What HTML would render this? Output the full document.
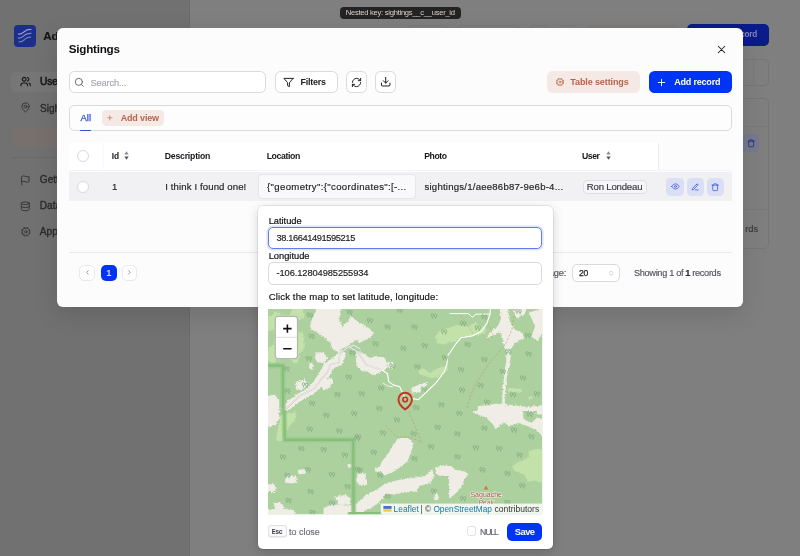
<!DOCTYPE html>
<html>
<head>
<meta charset="utf-8">
<title>Sightings</title>
<style>
*{box-sizing:border-box;margin:0;padding:0}
html,body{width:800px;height:556px;overflow:hidden;background:#7f7f7f;font-family:"Liberation Sans",sans-serif;}
.a{position:absolute}
.t{position:absolute;white-space:nowrap;line-height:1}
svg{overflow:visible}
#root{position:absolute;left:0;top:0;width:800px;height:556px;will-change:transform}
</style>
</head>
<body>
<div id="root">
<div class="a" style="left:0px;top:0px;width:800.00px;height:556.00px;background:#7f7f7f"></div>
<div class="a" style="left:0px;top:0px;width:189.60px;height:556.00px;background:#717171;border-right:1px solid #6b6b6b"></div>
<div class="a" style="left:14px;top:25px;width:22.00px;height:22.00px;background:#1b2e8c;border-radius:4px"></div>
<svg class="a" style="left:14px;top:25px" width="22" height="22" viewBox="0 0 22 22" fill="none" stroke="#949cc6" stroke-width="1.25" stroke-linecap="round"><path d="M4.5 9.2c3.2.3 4.3-1.2 6-2.7s3.2-2.3 6.5-2"/><path d="M4.5 13c3.2.3 4.3-1.2 6-2.7s3.2-2.3 6.5-2" opacity=".85"/><path d="M5 16.8c3.2.3 4.3-1.2 6-2.7s3-2.2 5.5-2" opacity=".7"/></svg>
<span class="t" style="left:43.2px;top:29.88px;font-size:11.6px;color:#151515;font-weight:bold;-webkit-text-stroke:.16px currentColor;">Ad</span>
<div class="a" style="left:10.5px;top:71.5px;width:179.50px;height:20.00px;background:#767676;border-radius:5px 0 0 5px"></div>
<svg class="a" style="left:19.80px;top:76.10px" width="11.2" height="11.2" viewBox="0 0 24 24" fill="none" stroke="#161616" stroke-width="2.4" stroke-linecap="round" stroke-linejoin="round"><path d="M16 21v-2a4 4 0 0 0-4-4H6a4 4 0 0 0-4 4v2"/><circle cx="9" cy="7" r="4"/><path d="M22 21v-2a4 4 0 0 0-3-3.87"/><path d="M16 3.13a4 4 0 0 1 0 7.75"/></svg>
<span class="t" style="left:40px;top:77.45px;font-size:10.1px;color:#141414;-webkit-text-stroke:.5px #141414;">Use</span>
<svg class="a" style="left:19.90px;top:102.30px" width="11" height="11" viewBox="0 0 24 24" fill="none" stroke="#343434" stroke-width="2.1" stroke-linecap="round" stroke-linejoin="round"><path d="M20 10c0 6-8 12-8 12s-8-6-8-12a8 8 0 0 1 16 0Z"/><circle cx="12" cy="10" r="3"/></svg>
<span class="t" style="left:40px;top:103.85px;font-size:10.1px;color:#2a2a2a;-webkit-text-stroke:.32px #2a2a2a;">Sigh</span>
<div class="a" style="left:10.5px;top:127.5px;width:179.50px;height:18.30px;background:#78706d;border-radius:5px 0 0 5px"></div>
<div class="a" style="left:10.5px;top:157.3px;width:178.50px;height:0.80px;background:#696969"></div>
<svg class="a" style="left:20.00px;top:174.50px" width="10.8" height="10.8" viewBox="0 0 24 24" fill="none" stroke="#343434" stroke-width="2.1" stroke-linecap="round" stroke-linejoin="round"><path d="M4 15s1-1 4-1 5 2 8 2 4-1 4-1V3s-1 1-4 1-5-2-8-2-4 1-4 1z"/><path d="M4 22v-7"/></svg>
<span class="t" style="left:39.8px;top:175.15px;font-size:10.1px;color:#2a2a2a;-webkit-text-stroke:.32px #2a2a2a;">Gett</span>
<svg class="a" style="left:20.10px;top:200.50px" width="10.6" height="10.6" viewBox="0 0 24 24" fill="none" stroke="#343434" stroke-width="2.1" stroke-linecap="round" stroke-linejoin="round"><ellipse cx="12" cy="5" rx="9" ry="3"/><path d="M3 5v14a9 3 0 0 0 18 0V5"/><path d="M3 12a9 3 0 0 0 18 0"/></svg>
<span class="t" style="left:39.8px;top:201.35px;font-size:10.1px;color:#2a2a2a;-webkit-text-stroke:.32px #2a2a2a;">Data</span>
<svg class="a" style="left:19.60px;top:226.10px" width="11.6" height="11.6" viewBox="0 0 24 24" fill="none" stroke="#343434" stroke-width="1.9" stroke-linecap="round" stroke-linejoin="round"><circle cx="12" cy="12" r="7.7"/><path d="M19.76 15.21L20.96 15.71M15.21 19.76L15.71 20.96M8.79 19.76L8.29 20.96M4.24 15.21L3.04 15.71M4.24 8.79L3.04 8.29M8.79 4.24L8.29 3.04M15.21 4.24L15.71 3.04M19.76 8.79L20.96 8.29" stroke-width="3.8" stroke-linecap="butt"/><circle cx="12" cy="12" r="2.5" stroke-width="1.8"/></svg>
<span class="t" style="left:39.8px;top:227.25px;font-size:10.1px;color:#2a2a2a;-webkit-text-stroke:.32px #2a2a2a;">App</span>
<div class="a" style="left:686.5px;top:24px;width:82.00px;height:21.70px;background:#0a1b8a;border-radius:5px"></div>
<span class="t" style="left:740.2px;top:31.46px;font-size:8.2px;font-weight:bold;color:#8188b9;letter-spacing:-0.250px;">cord</span>
<div class="a" style="left:407px;top:24.5px;width:41.00px;height:21.50px;border:1px solid #787878;border-radius:5px"></div>
<div class="a" style="left:457px;top:24.5px;width:63.00px;height:21.50px;border:1px solid #787878;border-radius:5px"></div>
<div class="a" style="left:529px;top:24.5px;width:21.00px;height:21.50px;border:1px solid #787878;border-radius:5px"></div>
<div class="a" style="left:557.5px;top:24.5px;width:20.50px;height:21.50px;border:1px solid #787878;border-radius:5px"></div>
<div class="a" style="left:587px;top:24.5px;width:92.00px;height:21.50px;background:#7f7a78;border-radius:5px"></div>
<div class="a" style="left:700px;top:59.3px;width:68.50px;height:27.00px;border:1px solid #767676;border-radius:5px"></div>
<div class="a" style="left:753.4px;top:60px;width:0.70px;height:26.00px;background:#7a7a7a"></div>
<div class="a" style="left:700px;top:98px;width:68.50px;height:151.30px;border:1px solid #767676;border-radius:5px"></div>
<div class="a" style="left:700px;top:126.3px;width:68.00px;height:0.70px;background:#797979"></div>
<div class="a" style="left:700px;top:208.8px;width:68.00px;height:0.70px;background:#797979"></div>
<div class="a" style="left:736px;top:134.3px;width:23.30px;height:17.30px;background:#757a8e;border-radius:4px"></div>
<svg class="a" style="left:746.50px;top:138.80px" width="8.4" height="8.4" viewBox="0 0 24 24" fill="none" stroke="#1f2c84" stroke-width="2.2" stroke-linecap="round" stroke-linejoin="round"><path d="M3 6h18"/><path d="M19 6v14a2 2 0 0 1-2 2H7a2 2 0 0 1-2-2V6"/><path d="M8 6V4a2 2 0 0 1 2-2h4a2 2 0 0 1 2 2v2"/></svg>
<span class="t" style="left:745.2px;top:224.83px;font-size:9.3px;color:#3a3a3a;-webkit-text-stroke:.16px currentColor;">rds</span>
<div class="a" style="left:340px;top:7px;width:120.60px;height:11.80px;background:#232323;border-radius:4px"></div>
<span class="t" style="left:345.8px;top:9.27px;font-size:7.6px;color:#dbd0ca;letter-spacing:-0.268px;">Nested key: sightings__c__user_id</span>
<div class="a" style="left:57.3px;top:27.7px;width:685.70px;height:279.20px;background:#fcfcfd;border-radius:6px;box-shadow:0 8px 24px rgba(0,0,0,.12)"></div>
<span class="t" style="left:68.8px;top:43.30px;font-size:11.7px;font-weight:bold;color:#111113;letter-spacing:-0.256px;">Sightings</span>
<svg class="a" style="left:715.40px;top:42.80px" width="13" height="13" viewBox="0 0 24 24" fill="none" stroke="#1c1c1e" stroke-width="1.9" stroke-linecap="round" stroke-linejoin="round"><path d="M18 6 6 18M6 6l12 12"/></svg>
<div class="a" style="left:68.8px;top:71.3px;width:197.70px;height:21.30px;border:1px solid #d9d9de;border-radius:5.5px;background:#fff"></div>
<svg class="a" style="left:73.90px;top:77.00px" width="10.6" height="10.6" viewBox="0 0 24 24" fill="none" stroke="#66666f" stroke-width="2.2" stroke-linecap="round" stroke-linejoin="round"><circle cx="11" cy="11" r="8"/><path d="m21 21-4.3-4.3"/></svg>
<span class="t" style="left:90.5px;top:78.53px;font-size:9.3px;color:#a6a6b0;letter-spacing:-0.177px;-webkit-text-stroke:.16px currentColor;">Search...</span>
<div class="a" style="left:275px;top:71.3px;width:62.60px;height:21.30px;border:1px solid #d9d9de;border-radius:5.5px;background:#fff"></div>
<svg class="a" style="left:283.40px;top:76.70px" width="11" height="11" viewBox="0 0 24 24" fill="none" stroke="#1c1c1e" stroke-width="2.1" stroke-linecap="round" stroke-linejoin="round"><polygon points="22 3 2 3 10 12.46 10 19 14 21 14 12.46 22 3"/></svg>
<span class="t" style="left:300.5px;top:77.68px;font-size:9.0px;font-weight:bold;color:#1c1c1e;letter-spacing:-0.236px;">Filters</span>
<div class="a" style="left:346.2px;top:71.3px;width:20.70px;height:21.30px;border:1px solid #d9d9de;border-radius:5.5px;background:#fff"></div>
<svg class="a" style="left:351.10px;top:76.50px" width="11" height="11" viewBox="0 0 24 24" fill="none" stroke="#1c1c1e" stroke-width="2.1" stroke-linecap="round" stroke-linejoin="round"><path d="M3 12a9 9 0 0 1 9-9 9.75 9.75 0 0 1 6.74 2.74L21 8"/><path d="M21 3v5h-5"/><path d="M21 12a9 9 0 0 1-9 9 9.75 9.75 0 0 1-6.74-2.74L3 16"/><path d="M8 16H3v5"/></svg>
<div class="a" style="left:375px;top:71.3px;width:21.20px;height:21.30px;border:1px solid #d9d9de;border-radius:5.5px;background:#fff"></div>
<svg class="a" style="left:380.00px;top:76.20px" width="11.4" height="11.4" viewBox="0 0 24 24" fill="none" stroke="#1c1c1e" stroke-width="2.1" stroke-linecap="round" stroke-linejoin="round"><path d="M21 15v4a2 2 0 0 1-2 2H5a2 2 0 0 1-2-2v-4"/><path d="M7 10l5 5 5-5"/><path d="M12 15V3"/></svg>
<div class="a" style="left:546.9px;top:71.3px;width:93.00px;height:21.40px;background:#f4e9e5;border-radius:5.5px"></div>
<svg class="a" style="left:554.50px;top:76.80px" width="10" height="10" viewBox="0 0 24 24" fill="none" stroke="#bd6d50" stroke-width="2.1" stroke-linecap="round" stroke-linejoin="round"><circle cx="12" cy="12" r="7.7"/><path d="M19.76 15.21L20.96 15.71M15.21 19.76L15.71 20.96M8.79 19.76L8.29 20.96M4.24 15.21L3.04 15.71M4.24 8.79L3.04 8.29M8.79 4.24L8.29 3.04M15.21 4.24L15.71 3.04M19.76 8.79L20.96 8.29" stroke-width="3.8" stroke-linecap="butt"/><circle cx="12" cy="12" r="2.5" stroke-width="1.8"/></svg>
<span class="t" style="left:570.3px;top:77.58px;font-size:9.0px;font-weight:bold;color:#b4664b;letter-spacing:-0.112px;">Table settings</span>
<div class="a" style="left:648.5px;top:71.3px;width:83.50px;height:21.40px;background:#0034f5;border-radius:5.5px"></div>
<svg class="a" style="left:656.30px;top:76.50px" width="11" height="11" viewBox="0 0 24 24" fill="none" stroke="#ffffff" stroke-width="2.0" stroke-linecap="round" stroke-linejoin="round"><path d="M5 12h14M12 5v14"/></svg>
<span class="t" style="left:674.2px;top:77.58px;font-size:9.0px;font-weight:bold;color:#ffffff;letter-spacing:-0.191px;">Add record</span>
<div class="a" style="left:68.8px;top:104.6px;width:663.00px;height:26.40px;border:1px solid #d9d9de;border-radius:5.5px;background:#fdfdfe"></div>
<span class="t" style="left:80.4px;top:113.06px;font-size:9.5px;color:#2f50d6;letter-spacing:0.119px;-webkit-text-stroke:.25px #2f50d6;">All</span>
<div class="a" style="left:80.2px;top:129.6px;width:11.00px;height:1.70px;background:#2f50d6;border-radius:1px"></div>
<div class="a" style="left:102.2px;top:110.2px;width:62.10px;height:15.50px;background:#f4e9e5;border-radius:4.5px"></div>
<svg class="a" style="left:106.40px;top:114.20px" width="7.6" height="7.6" viewBox="0 0 24 24" fill="none" stroke="#bd6d50" stroke-width="2.2" stroke-linecap="round" stroke-linejoin="round"><path d="M5 12h14M12 5v14"/></svg>
<span class="t" style="left:120.7px;top:114.28px;font-size:9.0px;font-weight:bold;color:#b4664b;letter-spacing:-0.159px;">Add view</span>
<div class="a" style="left:68.8px;top:143.4px;width:589.50px;height:26.40px;background:#ffffff"></div>
<div class="a" style="left:103px;top:143.4px;width:0.60px;height:26.40px;background:#fafafb"></div>
<div class="a" style="left:658px;top:143.4px;width:0.80px;height:26.40px;background:#ececf0"></div>
<div class="a" style="left:68.8px;top:169.6px;width:663.00px;height:0.70px;background:#f5f5f7"></div>
<span class="t" style="left:111.7px;top:151.99px;font-size:8.4px;font-weight:bold;color:#17171a;">Id</span>
<svg class="a" style="left:124.2px;top:151.3px" width="5" height="9" viewBox="0 0 5 9"><path d="M2.5 0.3 L4.7 3.6 H0.3Z" fill="#8c8c96"/><path d="M2.5 8.7 L4.7 5.4 H0.3Z" fill="#55555f"/></svg>
<span class="t" style="left:164.8px;top:151.74px;font-size:8.7px;font-weight:bold;color:#17171a;letter-spacing:-0.220px;">Description</span>
<span class="t" style="left:266.7px;top:151.74px;font-size:8.7px;font-weight:bold;color:#17171a;letter-spacing:-0.372px;">Location</span>
<span class="t" style="left:424.2px;top:151.74px;font-size:8.7px;font-weight:bold;color:#17171a;letter-spacing:-0.452px;">Photo</span>
<span class="t" style="left:582px;top:151.74px;font-size:8.7px;font-weight:bold;color:#17171a;letter-spacing:-0.443px;">User</span>
<svg class="a" style="left:606.1px;top:151.3px" width="5" height="9" viewBox="0 0 5 9"><path d="M2.5 0.3 L4.7 3.6 H0.3Z" fill="#8c8c96"/><path d="M2.5 8.7 L4.7 5.4 H0.3Z" fill="#55555f"/></svg>
<div class="a" style="left:68.8px;top:172.3px;width:663.00px;height:28.60px;background:#f1f1f4"></div>
<div class="a" style="left:76.8px;top:150px;width:12.00px;height:12.00px;border:1.2px solid #d8d8de;border-radius:50%;background:#fff"></div>
<div class="a" style="left:76.8px;top:181px;width:12.00px;height:12.00px;border:1.2px solid #d8d8de;border-radius:50%;background:#fff"></div>
<span class="t" style="left:112px;top:182.17px;font-size:9.6px;color:#1f1f22;letter-spacing:0.000px;-webkit-text-stroke:.16px currentColor;">1</span>
<span class="t" style="left:165.3px;top:182.17px;font-size:9.6px;color:#1f1f22;letter-spacing:0.108px;-webkit-text-stroke:.16px currentColor;">I think I found one!</span>
<div class="a" style="left:258.3px;top:174.2px;width:157.40px;height:25.30px;background:#f9f9fb;border:1px solid #e6e6eb;border-radius:4px"></div>
<span class="t" style="left:267px;top:182.17px;font-size:9.6px;color:#1f1f22;letter-spacing:0.338px;-webkit-text-stroke:.16px currentColor;">{"geometry":{"coordinates":[-...</span>
<span class="t" style="left:424.5px;top:182.17px;font-size:9.6px;color:#1f1f22;letter-spacing:0.218px;-webkit-text-stroke:.16px currentColor;">sightings/1/aee86b87-9e6b-4...</span>
<div class="a" style="left:582.5px;top:179.7px;width:64.30px;height:14.70px;background:#f6f6f8;border:1px solid #dedee4;border-radius:4px"></div>
<span class="t" style="left:586.8px;top:181.97px;font-size:9.6px;color:#3a3a40;letter-spacing:-0.192px;-webkit-text-stroke:.16px currentColor;">Ron Londeau</span>
<div class="a" style="left:666.3px;top:178px;width:17.70px;height:17.50px;background:#dadff5;border-radius:4.5px"></div>
<svg class="a" style="left:670.70px;top:182.35px" width="8.9" height="8.9" viewBox="0 0 24 24" fill="none" stroke="#2f4fd8" stroke-width="1.9" stroke-linecap="round" stroke-linejoin="round"><path d="M2 12s3.5-7 10-7 10 7 10 7-3.5 7-10 7-10-7-10-7Z"/><circle cx="12" cy="12" r="2.6"/></svg>
<div class="a" style="left:687px;top:178px;width:16.90px;height:17.50px;background:#dadff5;border-radius:4.5px"></div>
<svg class="a" style="left:691.30px;top:182.65px" width="8.3" height="8.3" viewBox="0 0 24 24" fill="none" stroke="#2f4fd8" stroke-width="2.1" stroke-linecap="round" stroke-linejoin="round"><path d="M12 20h9"/><path d="M16.5 3.5a2.121 2.121 0 0 1 3 3L7 19l-4 1 1-4L16.5 3.5z"/></svg>
<div class="a" style="left:706.9px;top:178px;width:17.00px;height:17.50px;background:#dadff5;border-radius:4.5px"></div>
<svg class="a" style="left:711.25px;top:182.65px" width="8.3" height="8.3" viewBox="0 0 24 24" fill="none" stroke="#2f4fd8" stroke-width="2.1" stroke-linecap="round" stroke-linejoin="round"><path d="M3 6h18"/><path d="M19 6v14a2 2 0 0 1-2 2H7a2 2 0 0 1-2-2V6"/><path d="M8 6V4a2 2 0 0 1 2-2h4a2 2 0 0 1 2 2v2"/></svg>
<div class="a" style="left:68.8px;top:251.6px;width:663.00px;height:0.70px;background:#e9e9ee"></div>
<div class="a" style="left:79.3px;top:265px;width:15.70px;height:15.60px;border:1px solid #eaeaee;border-radius:5px;background:#fff"></div>
<svg class="a" style="left:83.90px;top:269.40px" width="6.8" height="6.8" viewBox="0 0 24 24" fill="none" stroke="#85858d" stroke-width="3" stroke-linecap="round" stroke-linejoin="round"><path d="m15 18-6-6 6-6"/></svg>
<div class="a" style="left:100.8px;top:265px;width:16.00px;height:15.60px;background:#0034f5;border-radius:5px"></div>
<span class="t" style="left:106.3px;top:268.91px;font-size:9.2px;font-weight:bold;color:#d3d9ff;">1</span>
<div class="a" style="left:121.6px;top:265px;width:15.90px;height:15.60px;border:1px solid #eaeaee;border-radius:5px;background:#fff"></div>
<svg class="a" style="left:126.20px;top:269.40px" width="6.8" height="6.8" viewBox="0 0 24 24" fill="none" stroke="#85858d" stroke-width="3" stroke-linecap="round" stroke-linejoin="round"><path d="m9 18 6-6-6-6"/></svg>
<span class="t" style="left:527.2px;top:268.91px;font-size:9.2px;color:#55555f;letter-spacing:-0.080px;-webkit-text-stroke:.16px currentColor;">Per page:</span>
<div class="a" style="left:571.9px;top:263.7px;width:47.90px;height:18.10px;border:1px solid #d9d9de;border-radius:5px;background:#fff"></div>
<span class="t" style="left:579px;top:268.72px;font-size:8.6px;color:#1c1c1e;letter-spacing:-0.363px;-webkit-text-stroke:.25px #1c1c1e;">20</span>
<svg class="a" style="left:607.80px;top:269.60px" width="6.4" height="6.4" viewBox="0 0 24 24" fill="none" stroke="#9a9aa4" stroke-width="2.2" stroke-linecap="round" stroke-linejoin="round"><path d="m7 15 5 5 5-5"/><path d="m7 9 5-5 5 5"/></svg>
<span class="t" style="left:634px;top:269.11px;font-size:9.2px;color:#55555f;letter-spacing:-0.333px;-webkit-text-stroke:.16px currentColor;">Showing 1 of <b style="color:#2a2a30">1</b> records</span>
<div class="a" style="left:258.2px;top:205.8px;width:294.80px;height:342.80px;background:#ffffff;border-radius:5px;box-shadow:0 3px 12px rgba(0,0,0,.16),0 0 0 .7px rgba(0,0,0,.10)"></div>
<span class="t" style="left:268.7px;top:216.63px;font-size:9.3px;color:#111113;letter-spacing:-0.013px;-webkit-text-stroke:.2px #111;">Latitude</span>
<div class="a" style="left:268px;top:226.7px;width:274.20px;height:22.20px;border:1.4px solid #5f7fe6;border-radius:5px;background:#fff;box-shadow:0 0 0 1.6px rgba(95,127,230,.22)"></div>
<span class="t" style="left:276.5px;top:234.13px;font-size:9.3px;color:#1c1c1e;letter-spacing:-0.407px;-webkit-text-stroke:.16px currentColor;">38.16641491595215</span>
<span class="t" style="left:268.7px;top:252.43px;font-size:9.3px;color:#111113;letter-spacing:-0.005px;-webkit-text-stroke:.2px #111;">Longitude</span>
<div class="a" style="left:268px;top:262.4px;width:274.20px;height:22.20px;border:1px solid #d9d9de;border-radius:5px;background:#fff"></div>
<span class="t" style="left:276.5px;top:268.93px;font-size:9.3px;color:#1c1c1e;letter-spacing:-0.088px;-webkit-text-stroke:.16px currentColor;">-106.12804985255934</span>
<span class="t" style="left:268.7px;top:292.37px;font-size:9.6px;color:#111113;letter-spacing:0.118px;-webkit-text-stroke:.16px currentColor;">Click the map to set latitude, longitude:</span>
<svg class="a" style="left:268px;top:308.8px;border-radius:1px" width="274.2" height="205.2" viewBox="0 0 274.2 205.2"><defs><filter id="rg" x="-5%" y="-5%" width="110%" height="110%"><feTurbulence type="fractalNoise" baseFrequency="0.55" numOctaves="2" seed="7" result="n"/><feDisplacementMap in="SourceGraphic" in2="n" scale="3.4" xChannelSelector="R" yChannelSelector="G"/></filter><filter id="rg2" x="-5%" y="-5%" width="110%" height="110%"><feTurbulence type="fractalNoise" baseFrequency="0.4" numOctaves="2" seed="3" result="n"/><feDisplacementMap in="SourceGraphic" in2="n" scale="3.4" xChannelSelector="R" yChannelSelector="G"/></filter><g id="tr" fill="none" stroke="#82ad82" stroke-width=".8"><ellipse cx="-1.5" cy="-1.2" rx="1.15" ry="1.6"/><path d="M-1.5 .4v1.7"/><ellipse cx="1.6" cy="-.7" rx="1.15" ry="1.6"/><path d="M1.6 .9v1.7"/></g><clipPath id="mc"><rect x="0" y="0" width="274.2" height="205.2"/></clipPath></defs><g clip-path="url(#mc)"><rect x="-5" y="-5" width="285" height="216" fill="#add19e"/><g filter="url(#rg2)"><polygon points="0.0,8.3 6.5,3.7 14.8,1.9 27.8,0.0 35.2,0.0 37.0,11.1 35.2,25.9 37.0,37.0 32.4,44.4 29.6,53.7 16.7,55.6 5.6,53.7 0.0,51.9" fill="#c3e2a9"/><polygon points="0.0,0.0 7.4,0.0 5.6,5.6 0.0,7.4" fill="#add19e"/><polygon points="0.0,22.2 5.6,20.4 7.4,27.8 4.6,37.0 0.0,38.9" fill="#add19e"/><polygon points="29.3,10.2 37.0,9.3 38.0,22.2 30.6,24.1" fill="#add19e"/><polygon points="11.1,0.0 24.1,0.0 22.2,5.6 13.0,6.5" fill="#add19e"/><polygon points="7.4,50.4 22.2,50.0 27.8,55.6 7.4,55.9" fill="#add19e"/><polygon points="168.1,27.8 170.9,22.2 178.3,19.4 182.0,18.5 189.4,15.7 195.0,17.6 202.4,16.7 207.9,13.3 212.6,18.5 219.0,18.5 217.2,24.1 209.8,25.9 200.5,27.8 193.1,28.7 185.7,34.3 182.0,33.3 176.4,35.2 169.0,34.3" fill="#c3e2a9"/><polygon points="149.3,62.0 154.8,59.3 162.2,63.9 169.6,59.3 177.0,56.5 181.1,58.9 177.0,63.0 171.5,67.6 164.1,68.9 156.7,66.7 150.2,64.8" fill="#c3e2a9"/><polygon points="239.4,78.7 246.8,79.3 254.2,80.6 253.3,83.3 245.0,83.0 239.8,81.9" fill="#c3e2a9"/><polygon points="259.8,88.5 264.4,87.0 264.8,89.3 260.7,90.7" fill="#c3e2a9"/><polygon points="13.9,105.8 27.8,103.0 27.4,111.3 21.9,116.0 18.5,123.7 15.2,131.1 7.8,133.0 9.3,123.7 10.7,114.1" fill="#c3e2a9"/><polygon points="244.0,157.6 250.5,153.0 259.8,149.3 261.6,141.9 269.0,140.0 276.4,141.0 276.4,174.3 267.2,171.5 259.8,173.0 257.0,166.0 252.4,164.1 246.8,162.3" fill="#c3e2a9"/></g><g filter="url(#rg)"><polygon points="49.1,-1.9 73.1,-1.9 71.3,10.2 74.1,17.6 79.6,13.0 82.4,7.4 92.0,13.9 100.0,18.5 105.9,24.1 103.7,27.8 96.3,31.5 92.0,34.3 87.0,30.6 81.5,36.1 74.1,39.8 70.4,43.5 64.8,39.8 61.1,32.4 55.6,27.8 50.0,24.1 43.5,20.4 42.2,14.8 45.4,7.4" fill="#f0ede7"/><polygon points="48.5,43.0 55.6,43.7 60.4,49.3 55.2,54.1 49.3,53.3 46.7,48.5" fill="#f0ede7"/><polygon points="27.8,73.1 37.0,70.4 39.8,75.9 33.3,81.5 27.8,79.6" fill="#f0ede7"/><polygon points="41.7,52.8 45.4,55.6 44.4,61.1 41.1,59.3" fill="#f0ede7"/><polygon points="73.1,41.1 78.1,45.4 73.7,55.9 65.2,58.9 62.6,65.2 56.3,73.7 49.6,82.0 38.5,88.5 28.3,95.0 20.7,101.5 15.7,103.3 12.2,100.0 19.4,92.2 28.7,85.2 39.3,79.6 45.9,72.2 51.9,62.6 56.5,54.6 63.3,50.4 68.1,45.4" fill="#f0ede7"/><polygon points="55.6,71.3 63.9,68.9 65.2,73.1 61.1,78.7 55.2,81.5 53.7,76.9" fill="#f0ede7"/><polygon points="-0.9,87.0 6.5,85.6 11.1,89.8 11.5,103.0 -0.9,103.0" fill="#f0ede7"/><polygon points="88.1,41.7 95.6,44.4 101.1,48.5 108.5,47.2 115.9,48.5 119.6,53.7 117.8,60.2 110.4,63.9 104.8,66.3 100.2,63.0 93.7,62.0 88.1,55.6" fill="#f0ede7"/><polygon points="119.3,53.7 124.3,52.8 127.0,55.6 124.3,59.3 119.6,58.9" fill="#f0ede7"/><polygon points="142.8,81.5 145.6,77.8 153.0,75.0 160.0,72.8 157.0,77.8 153.0,82.4 145.6,84.4" fill="#f0ede7"/><polygon points="231.6,-1.9 239.8,-1.9 241.6,11.1 246.8,20.4 254.6,24.1 256.1,29.6 246.8,34.3 243.1,39.8 236.8,41.1 234.8,31.5 232.0,22.6 223.1,27.8 218.1,29.6 221.8,23.1 230.1,17.6 232.9,9.3" fill="#f0ede7"/><polygon points="245.0,-1.9 259.8,-1.9 256.4,5.6 249.0,9.6 245.9,4.6" fill="#f0ede7"/><polygon points="260.7,3.7 269.0,0.9 276.4,-0.9 276.4,21.3 269.4,31.9 263.5,27.8 267.2,17.0 263.5,9.6" fill="#f0ede7"/><polygon points="238.3,41.1 242.4,41.1 242.4,55.6 239.4,63.0 237.9,77.8 236.8,92.6 238.7,100.9 234.6,100.9 234.2,88.9 235.3,74.1 236.8,61.1 238.3,51.9" fill="#f0ede7"/><polygon points="209.8,97.2 228.3,94.8 243.1,95.9 259.8,98.1 276.4,96.3 276.4,105.6 209.8,105.6" fill="#f0ede7"/><polygon points="204.2,102.1 254.2,102.1 256.1,110.4 263.5,114.1 269.0,108.6 276.4,110.4 276.4,128.9 269.0,121.5 259.8,116.9 250.5,114.1 241.3,116.9 235.7,113.2 228.3,119.7 223.7,114.1 218.1,108.6 209.8,105.8" fill="#f0ede7"/><polygon points="181.1,156.7 189.4,161.3 195.9,162.3 200.5,165.0 195.9,171.5 193.1,178.9 187.6,184.5 181.1,190.0" fill="#f0ede7"/><polygon points="131.7,128.9 140.0,128.9 145.6,134.5 142.8,143.7 139.1,153.0 131.7,158.6 123.3,164.1 115.9,166.9 111.3,158.6 114.1,152.1 120.6,144.7 124.3,136.3 128.9,130.8" fill="#f0ede7"/><polygon points="86.3,196.5 90.0,193.7 97.4,186.3 108.5,180.8 117.8,174.3 132.6,170.6 145.6,168.7 156.7,166.9 164.1,160.4 166.3,166.0 162.6,174.3 151.1,177.1 149.3,182.6 136.3,183.6 127.0,185.4 117.8,184.5 114.1,190.0 108.5,195.6 101.1,200.2 90.0,203.9 78.9,206.0 78.9,199.3" fill="#f0ede7"/><polygon points="166.9,158.6 175.2,156.3 184.4,157.6 184.4,166.9 173.3,166.9 167.8,165.0" fill="#f0ede7"/><polygon points="90.0,165.0 97.4,164.1 99.3,175.2 91.9,177.1 88.1,171.5" fill="#f0ede7"/><polygon points="106.7,158.6 115.9,158.2 115.6,162.6 107.6,162.6" fill="#f0ede7"/><polygon points="167.8,180.8 171.5,190.0 165.9,191.9" fill="#f0ede7"/><polygon points="-0.9,102.1 10.7,102.1 11.5,109.5 6.5,116.9 -0.9,117.8" fill="#f0ede7"/><polygon points="17.6,167.8 24.1,166.3 28.7,168.2 28.7,173.4 22.2,174.9 17.0,172.6" fill="#f0ede7"/><polygon points="29.6,160.8 38.0,160.0 38.0,164.5 30.6,165.6" fill="#f0ede7"/><polygon points="-0.9,175.2 5.6,174.9 8.9,178.9 5.6,183.0 -0.9,183.0" fill="#f0ede7"/><polygon points="5.6,193.7 12.0,193.0 15.7,196.5 14.8,201.1 7.4,201.5" fill="#f0ede7"/><polygon points="-0.9,201.1 11.1,199.7 25.9,200.8 27.8,208.6 -0.9,208.6" fill="#f0ede7"/><polygon points="66.7,187.3 77.8,186.0 83.7,190.0 81.5,195.6 70.4,196.0" fill="#f0ede7"/><polygon points="55.6,199.3 63.0,195.6 77.8,196.5 94.4,195.6 94.4,208.6 55.6,208.6" fill="#f0ede7"/><polygon points="79.6,154.9 83.7,155.2 83.3,158.6 80.0,158.6" fill="#f0ede7"/></g><g filter="url(#rg)"><polygon points="245.9,11.1 255.1,8.3 263.5,11.1 264.4,24.1 256.1,25.0 248.7,20.4" fill="#add19e"/><polygon points="254.6,102.1 269.0,102.1 268.1,108.6 263.5,113.2 256.4,110.0" fill="#add19e"/></g><polyline points="-1.9,56.7 14.8,56.7 15.2,103.0" fill="none" stroke="#97c98a" stroke-width="5.4" stroke-linejoin="round" stroke-linecap="round" opacity=".7"/><polyline points="-1.9,56.7 14.8,56.7 15.2,103.0" fill="none" stroke="#86bf7a" stroke-width="2.2" stroke-linejoin="round" stroke-linecap="round" /><polyline points="16.3,102.1 16.7,130.8 85.2,130.8 85.6,206.7" fill="none" stroke="#97c98a" stroke-width="5.4" stroke-linejoin="round" stroke-linecap="round" opacity=".7"/><polyline points="16.3,102.1 16.7,130.8 85.2,130.8 85.6,206.7" fill="none" stroke="#86bf7a" stroke-width="2.2" stroke-linejoin="round" stroke-linecap="round" /><polyline points="81.5,205.0 113.0,205.0" fill="none" stroke="#86bf7a" stroke-width="4" stroke-linejoin="round" stroke-linecap="round" /><polyline points="246.8,0.0 244.0,20.4 237.6,35.2 221.8,53.7 209.8,71.3 202.4,87.0 198.7,100.9" fill="none" stroke="#b3925f" stroke-width="0.7" stroke-linejoin="round" stroke-linecap="round" stroke-dasharray="1.5 2.3" opacity=".75"/><polyline points="219.0,11.1 225.5,27.8 220.9,29.6" fill="none" stroke="#d08a6a" stroke-width="0.6" stroke-linejoin="round" stroke-linecap="round" stroke-dasharray="1.5 2.3" opacity=".75"/><polyline points="140.9,103.0 153.9,133.6" fill="none" stroke="#b3925f" stroke-width="0.7" stroke-linejoin="round" stroke-linecap="round" stroke-dasharray="1.5 2.3" opacity=".75"/><polyline points="117.8,116.9 128.9,128.0 141.9,128.0 153.9,133.6" fill="none" stroke="#b3925f" stroke-width="0.7" stroke-linejoin="round" stroke-linecap="round" stroke-dasharray="1.5 2.3" opacity=".75"/><polyline points="193.1,7.4 206.1,25.9" fill="none" stroke="#b3925f" stroke-width="0.6" stroke-linejoin="round" stroke-linecap="round" stroke-dasharray="1.5 2.3" opacity=".75"/><polyline points="92.0,39.8 85.6,36.1 79.6,38.5 71.9,44.4 70.7,54.1 62.6,55.6 59.6,63.0 51.5,72.6 46.3,79.6 31.5,87.0 17.6,100.4" fill="none" stroke="#c4c4c4" stroke-width="1.5" stroke-linejoin="round" stroke-linecap="round" /><polyline points="92.0,39.8 85.6,36.1 79.6,38.5 71.9,44.4 70.7,54.1 62.6,55.6 59.6,63.0 51.5,72.6 46.3,79.6 31.5,87.0 17.6,100.4" fill="none" stroke="#f7f7f5" stroke-width="0.8" stroke-linejoin="round" stroke-linecap="round" /><polyline points="81.7,38.0 90.0,43.5 98.3,55.6 114.1,61.1" fill="none" stroke="#c4c4c4" stroke-width="1.5" stroke-linejoin="round" stroke-linecap="round" /><polyline points="81.7,38.0 90.0,43.5 98.3,55.6 114.1,61.1" fill="none" stroke="#f7f7f5" stroke-width="0.8" stroke-linejoin="round" stroke-linecap="round" /><polyline points="114.1,61.1 119.6,64.8 120.7,72.6 125.2,75.9 131.7,77.8 134.4,83.3 136.3,87.4" fill="none" stroke="#ffffff" stroke-width="1.15" stroke-linejoin="round" stroke-linecap="round" /><polyline points="115.0,74.1 119.6,76.9 124.3,77.8" fill="none" stroke="#f4f4f0" stroke-width="1.0" stroke-linejoin="round" stroke-linecap="round" /><polyline points="144.8,89.6 150.4,90.7 167.8,74.1 176.1,63.0 178.9,55.6 179.8,46.3 182.0,43.5 187.6,35.2 193.1,28.7 204.3,26.9 213.5,22.2 219.1,13.9 221.9,5.2 222.4,0.0" fill="none" stroke="#ffffff" stroke-width="1.15" stroke-linejoin="round" stroke-linecap="round" /><polyline points="182.0,4.6 200.5,4.6 204.2,8.3 207.9,5.2 221.8,5.2" fill="none" stroke="#ffffff" stroke-width="1.0" stroke-linejoin="round" stroke-linecap="round" /><use href="#tr" x="41.7" y="6.5"/><use href="#tr" x="43.5" y="27.8"/><use href="#tr" x="40.7" y="50.0"/><use href="#tr" x="18.5" y="60.2"/><use href="#tr" x="80.6" y="68.5"/><use href="#tr" x="37.0" y="76.3"/><use href="#tr" x="19.4" y="82.4"/><use href="#tr" x="69.4" y="86.1"/><use href="#tr" x="43.9" y="94.8"/><use href="#tr" x="84.3" y="44.4"/><use href="#tr" x="81.5" y="3.7"/><use href="#tr" x="131.7" y="1.9"/><use href="#tr" x="102.0" y="12.0"/><use href="#tr" x="119.6" y="18.5"/><use href="#tr" x="146.5" y="18.5"/><use href="#tr" x="165.9" y="7.4"/><use href="#tr" x="176.1" y="23.1"/><use href="#tr" x="107.6" y="35.2"/><use href="#tr" x="135.4" y="39.8"/><use href="#tr" x="156.7" y="37.0"/><use href="#tr" x="177.0" y="49.1"/><use href="#tr" x="149.3" y="58.3"/><use href="#tr" x="124.3" y="57.4"/><use href="#tr" x="113.1" y="79.6"/><use href="#tr" x="93.7" y="85.2"/><use href="#tr" x="155.7" y="80.6"/><use href="#tr" x="173.3" y="96.3"/><use href="#tr" x="111.3" y="100.0"/><use href="#tr" x="148.3" y="99.1"/><use href="#tr" x="216.3" y="8.3"/><use href="#tr" x="195.0" y="14.8"/><use href="#tr" x="209.8" y="19.4"/><use href="#tr" x="199.6" y="36.1"/><use href="#tr" x="240.3" y="43.5"/><use href="#tr" x="260.7" y="45.4"/><use href="#tr" x="216.3" y="50.9"/><use href="#tr" x="193.1" y="61.1"/><use href="#tr" x="234.8" y="63.0"/><use href="#tr" x="255.1" y="69.4"/><use href="#tr" x="212.6" y="76.9"/><use href="#tr" x="194.0" y="81.5"/><use href="#tr" x="245.0" y="86.1"/><use href="#tr" x="269.0" y="85.2"/><use href="#tr" x="219.0" y="93.5"/><use href="#tr" x="259.8" y="26.9"/><use href="#tr" x="250.5" y="2.8"/><use href="#tr" x="58.3" y="106.7"/><use href="#tr" x="86.1" y="104.9"/><use href="#tr" x="41.7" y="120.6"/><use href="#tr" x="71.3" y="122.4"/><use href="#tr" x="88.9" y="129.9"/><use href="#tr" x="33.3" y="140.0"/><use href="#tr" x="55.6" y="141.0"/><use href="#tr" x="76.9" y="146.5"/><use href="#tr" x="14.8" y="148.4"/><use href="#tr" x="39.8" y="161.3"/><use href="#tr" x="63.9" y="166.0"/><use href="#tr" x="89.8" y="161.3"/><use href="#tr" x="19.4" y="166.9"/><use href="#tr" x="79.6" y="178.0"/><use href="#tr" x="42.6" y="183.0"/><use href="#tr" x="20.4" y="191.9"/><use href="#tr" x="63.9" y="194.7"/><use href="#tr" x="44.4" y="203.9"/><use href="#tr" x="128.9" y="111.3"/><use href="#tr" x="115.0" y="124.3"/><use href="#tr" x="145.6" y="125.2"/><use href="#tr" x="169.6" y="118.7"/><use href="#tr" x="90.0" y="128.0"/><use href="#tr" x="163.1" y="138.2"/><use href="#tr" x="105.7" y="143.7"/><use href="#tr" x="146.5" y="150.2"/><use href="#tr" x="91.9" y="161.3"/><use href="#tr" x="112.2" y="166.9"/><use href="#tr" x="165.9" y="182.6"/><use href="#tr" x="119.6" y="188.2"/><use href="#tr" x="191.3" y="104.9"/><use href="#tr" x="216.3" y="119.7"/><use href="#tr" x="189.4" y="125.2"/><use href="#tr" x="245.9" y="121.5"/><use href="#tr" x="263.5" y="128.0"/><use href="#tr" x="207.9" y="139.1"/><use href="#tr" x="231.1" y="140.0"/><use href="#tr" x="251.4" y="146.5"/><use href="#tr" x="189.4" y="148.4"/><use href="#tr" x="214.4" y="161.3"/><use href="#tr" x="239.4" y="165.0"/><use href="#tr" x="254.2" y="177.1"/><use href="#tr" x="195.0" y="190.0"/><use href="#tr" x="239.4" y="193.7"/><use href="#tr" x="261.6" y="105.8"/><path d="M218 176.6 l2.3 4 h-4.6z" fill="#c9794a"/><text x="218.2" y="188.4" font-family="Liberation Sans,sans-serif" font-size="6.6" text-anchor="middle" fill="#8a5743" stroke="#f4f1ea" stroke-width="1.2" paint-order="stroke" textLength="31.5" lengthAdjust="spacingAndGlyphs">Saguache</text><text x="218.2" y="195.8" font-family="Liberation Sans,sans-serif" font-size="6.6" text-anchor="middle" fill="#8a5743" stroke="#f4f1ea" stroke-width="1.2" paint-order="stroke">Peak</text><g transform="translate(127.1,82.1) scale(.84)" fill="none" stroke="#c6361e" stroke-width="2.35" stroke-linecap="round" stroke-linejoin="round"><path d="M20 10c0 6-8 12-8 12s-8-6-8-12a8 8 0 0 1 16 0Z"/><circle cx="12" cy="10" r="2.7" stroke-width="2"/></g><rect x="7.3" y="7.3" width="22.2" height="42.4" rx="2.6" fill="#ffffff" stroke="#b3b8ae" stroke-width="1.2"/><path d="M8 28.3h20.8" stroke="#cfcfcf" stroke-width=".7"/><path d="M15.2 19.6h8.4M19.4 15.4v8.4" stroke="#111" stroke-width="1.6"/><path d="M15.2 39.7h8.4" stroke="#111" stroke-width="1.6"/><rect x="112.8" y="194.6" width="162" height="11" fill="#ffffff" fill-opacity=".82"/><rect x="115.4" y="197" width="8.2" height="2.9" fill="#3e73c9"/><rect x="115.4" y="199.9" width="8.2" height="2.9" fill="#f3cf46"/></g><g font-family="Liberation Sans,sans-serif" font-size="8.3"><text x="125.6" y="203.1" fill="#1478a8" textLength="25.2" lengthAdjust="spacingAndGlyphs">Leaflet</text><text x="152.6" y="203.1" fill="#444" textLength="10.6" lengthAdjust="spacingAndGlyphs">| ©</text><text x="165.4" y="203.1" fill="#1478a8" textLength="58.6" lengthAdjust="spacingAndGlyphs">OpenStreetMap</text><text x="226.6" y="203.1" fill="#333" textLength="44.6" lengthAdjust="spacingAndGlyphs">contributors</text></g></svg>
<div class="a" style="left:268.3px;top:525.4px;width:18.30px;height:12.00px;border:1px solid #e0e0e6;border-radius:3px;background:#fafafb;box-shadow:0 .5px 0 #dedee4"></div>
<span class="t" style="left:271.7px;top:529.50px;font-size:6.5px;font-weight:bold;color:#3b3b42;letter-spacing:-0.402px;font-family:&quot;Liberation Mono&quot;,monospace;">Esc</span>
<span class="t" style="left:289.1px;top:528.37px;font-size:8.9px;color:#6c6c76;letter-spacing:0.001px;-webkit-text-stroke:.16px currentColor;">to close</span>
<div class="a" style="left:467px;top:526.4px;width:9.00px;height:10.00px;border:1px solid #e0e0e5;border-radius:2.5px;background:#fff"></div>
<span class="t" style="left:480px;top:527.74px;font-size:8.7px;color:#66666f;letter-spacing:-1.140px;-webkit-text-stroke:.15px #66666f;">NULL</span>
<div class="a" style="left:507.2px;top:522.5px;width:34.80px;height:18.10px;background:#0034f5;border-radius:5px"></div>
<span class="t" style="left:514.8px;top:527.14px;font-size:9.4px;font-weight:bold;color:#ffffff;letter-spacing:-0.535px;">Save</span>
</div>
</body>
</html>
